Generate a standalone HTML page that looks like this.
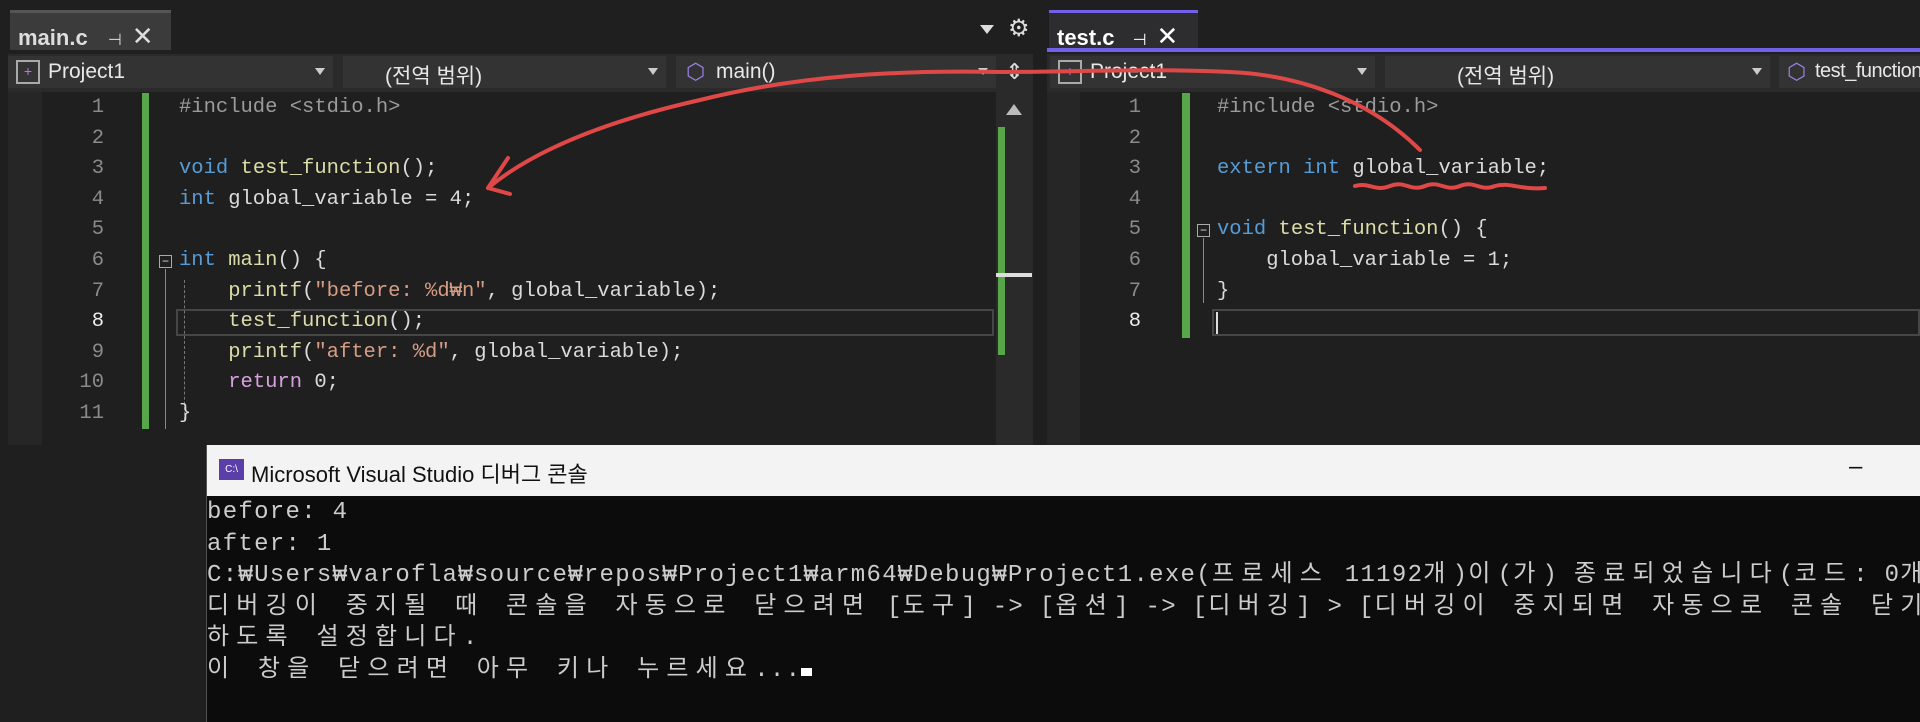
<!DOCTYPE html>
<html><head><meta charset="utf-8"><style>
*{margin:0;padding:0;box-sizing:border-box}
body{width:1920px;height:722px;background:#1f1f1f;overflow:hidden;position:relative;font-family:"Liberation Sans","Noto Sans CJK KR",sans-serif;color:#dadada}
.abs{position:absolute}
.tab{position:absolute;top:10px;height:40px;background:#3b3b3b;border-top:3px solid #555;font-size:22px;font-weight:bold;color:#ddd;padding:8px 0 0 8px;white-space:nowrap}
.bar{position:absolute;top:54px;height:38px;background:#2a2a2a}
.dd{position:absolute;top:2px;height:32px;background:#333;font-size:21px;color:#e8e8e8;padding:4px 0 0 10px;white-space:nowrap;overflow:hidden}
.dd .ar{position:absolute;right:8px;top:12px;border-left:5px solid transparent;border-right:5px solid transparent;border-top:7px solid #ccc}
.code{position:absolute;font-family:"Liberation Mono","Noto Sans CJK KR",monospace;font-size:20.5px;line-height:30.6px;white-space:pre}
.ln{position:absolute;text-align:right;color:#8a8a8a;font-family:"Liberation Mono",monospace;font-size:20.5px;line-height:30.6px}
.k{color:#569cd6}.f{color:#dcdcaa}.s{color:#d69d85}.p{color:#9b9b9b}.r{color:#d8a0df}
.con{position:absolute;left:206px;top:445px;width:1714px;height:277px;background:#0c0c0c;border-left:1px solid #555;overflow:hidden}
.ct{height:51px;background:#f3f3f3;color:#111;font-size:22px;padding:12px 0 0 44px;position:relative}
.cl{font-family:"Liberation Mono","Noto Sans CJK KR",monospace;font-size:24px;line-height:31.5px;color:#cccccc;white-space:pre;margin-top:1px;letter-spacing:1.3px}
.cl b{font-weight:normal;letter-spacing:7.2px}
</style></head><body>
<div class="tab" style="left:10px;width:161px">main.c <span style="font-weight:normal;font-size:16px;margin-left:14px">⊣</span><span style="font-weight:normal;font-size:26px;margin-left:10px">✕</span></div>
<div class="abs" style="left:980px;top:25px;border-left:7px solid transparent;border-right:7px solid transparent;border-top:9px solid #ddd"></div>
<div class="abs" style="left:1008px;top:14px;font-size:24px;color:#ddd">⚙</div>
<div class="tab" style="left:1049px;width:149px;background:#2d2d30;border-top:3px solid #7160e8;color:#fff">test.c <span style="font-weight:normal;font-size:16px;margin-left:12px">⊣</span><span style="font-weight:normal;font-size:26px;margin-left:10px">✕</span></div>
<div class="abs" style="left:1047px;top:48px;width:873px;height:4px;background:#7160e8"></div>
<div class="bar" style="left:8px;width:988px">
 <div class="dd" style="left:0;width:325px;padding-left:40px"><span class="abs" style="left:8px;top:4px;width:24px;height:24px;border:2px solid #aaa;color:#c070f0;font-size:14px;line-height:18px;text-align:center">+</span>Project1<span class="ar"></span></div>
 <div class="dd" style="left:335px;width:323px;padding-left:42px">(전역 범위)<span class="ar"></span></div>
 <div class="dd" style="left:668px;width:320px;padding-left:40px"><span class="abs" style="left:10px;top:3px;color:#9b7fe0;font-size:22px">⬡</span>main()<span class="ar"></span></div>
</div>
<div class="abs" style="left:996px;top:54px;width:37px;height:38px;background:#2a2a2a;color:#ddd;font-size:22px;text-align:center;line-height:36px">⇕</div>
<div class="bar" style="left:1047px;width:873px">
 <div class="dd" style="left:3px;width:325px;padding-left:40px"><span class="abs" style="left:8px;top:4px;width:24px;height:24px;border:2px solid #aaa;color:#c070f0;font-size:14px;line-height:18px;text-align:center">+</span>Project1<span class="ar"></span></div>
 <div class="dd" style="left:338px;width:385px;padding-left:72px">(전역 범위)<span class="ar"></span></div>
 <div class="dd" style="left:732px;width:141px;padding-left:36px;font-size:20px;letter-spacing:-0.5px"><span class="abs" style="left:8px;top:3px;color:#9b7fe0;font-size:22px">⬡</span>test_function()</div>
</div>
<div class="abs" style="left:8px;top:92px;width:34px;height:353px;background:#262626"></div>
<div class="abs" style="left:142px;top:93px;width:7px;height:336px;background:#57a64a"></div>
<div class="abs" style="left:176px;top:309px;width:818px;height:27px;border:2px solid #464646"></div>
<div class="ln" style="left:40px;top:93px;width:64px">1<br>2<br>3<br>4<br>5<br>6<br>7<br><span style="color:#eee">8</span><br>9<br>10<br>11</div>
<div class="abs" style="left:159px;top:255px;width:13px;height:13px;border:1px solid #aaa;color:#ddd;font-size:12px;line-height:10px;text-align:center">−</div>
<div class="abs" style="left:165px;top:269px;width:1px;height:160px;background:#888"></div>
<div class="abs" style="left:184px;top:280px;height:140px;border-left:1px dashed #777"></div>
<div class="code" style="left:179px;top:93px"><span class="p">#include &lt;stdio.h&gt;</span>

<span class="k">void</span> <span class="f">test_function</span>();
<span class="k">int</span> global_variable = 4;

<span class="k">int</span> <span class="f">main</span>() {
    <span class="f">printf</span>(<span class="s">"before: %d₩n"</span>, global_variable);
    <span class="f">test_function</span>();
    <span class="f">printf</span>(<span class="s">"after: %d"</span>, global_variable);
    <span class="r">return</span> 0;
}</div>
<div class="abs" style="left:996px;top:92px;width:37px;height:353px;background:#2a2a2a"></div>
<div class="abs" style="left:1006px;top:104px;border-left:8px solid transparent;border-right:8px solid transparent;border-bottom:11px solid #bbb"></div>
<div class="abs" style="left:998px;top:127px;width:7px;height:228px;background:#57a64a"></div>
<div class="abs" style="left:996px;top:273px;width:36px;height:4px;background:#ddd"></div>
<div class="abs" style="left:1047px;top:92px;width:33px;height:353px;background:#262626"></div>
<div class="abs" style="left:1182px;top:93px;width:8px;height:245px;background:#57a64a"></div>
<div class="abs" style="left:1212px;top:309px;width:708px;height:27px;border:2px solid #464646"></div>
<div class="abs" style="left:1216px;top:312px;width:2px;height:22px;background:#ddd"></div>
<div class="ln" style="left:1080px;top:93px;width:61px">1<br>2<br>3<br>4<br>5<br>6<br>7<br><span style="color:#eee">8</span></div>
<div class="abs" style="left:1197px;top:224px;width:13px;height:13px;border:1px solid #aaa;color:#ddd;font-size:12px;line-height:10px;text-align:center">−</div>
<div class="abs" style="left:1203px;top:238px;width:1px;height:65px;background:#888"></div>
<div class="code" style="left:1217px;top:93px"><span class="p">#include &lt;stdio.h&gt;</span>

<span class="k">extern</span> <span class="k">int</span> global_variable;

<span class="k">void</span> <span class="f">test_function</span>() {
    global_variable = 1;
}</div>
<div class="con">
 <div class="ct"><span class="abs" style="left:12px;top:14px;width:25px;height:21px;background:#5a3fa8;color:#fff;font-size:10px;line-height:21px;text-align:center">C:\</span>Microsoft Visual Studio 디버그 콘솔<span class="abs" style="left:1642px;top:8px;font-size:24px">–</span></div>
 <div class="cl">before: 4
after: 1
C:₩Users₩varofla₩source₩repos₩Project1₩arm64₩Debug₩Project1.exe(<b>프로세스</b> 11192<b>개</b>)<b>이</b>(<b>가</b>) <b>종료되었습니다</b>(<b>코드</b>: 0<b>개</b>
<b>디버깅이 중지될 때 콘솔을 자동으로 닫으려면</b> [<b>도구</b>] -&gt; [<b>옵션</b>] -&gt; [<b>디버깅</b>] &gt; [<b>디버깅이 중지되면 자동으로 콘솔 닫기</b>
<b>하도록 설정합니다</b>.
<b>이 창을 닫으려면 아무 키나 누르세요</b>...<span style="display:inline-block;width:11px;height:8px;background:#fff"></span></div>
</div>
<svg class="abs" style="left:0;top:0" width="1920" height="722">
<g fill="none" stroke="#e04848" stroke-width="4" stroke-linecap="round" stroke-linejoin="round">
<path d="M1420,150 C1370,100 1300,75 1230,72 C1150,68 1080,72 1000,72 C900,70 800,75 700,100 C620,118 540,145 488,188"/>
<path d="M488,188 L508,158 M488,188 L510,194"/>
<path d="M1355,186 C1370,182 1375,192 1390,186 C1405,180 1410,192 1425,186 C1440,180 1445,192 1460,186 C1475,180 1480,192 1495,186 C1510,182 1520,190 1545,188"/>
</g></svg>
</body></html>
